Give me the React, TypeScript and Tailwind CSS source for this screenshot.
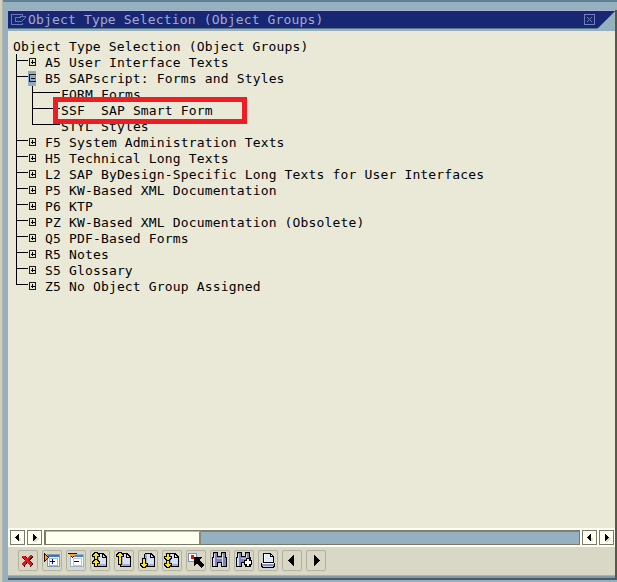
import { useState, type ReactNode } from "react";

type Row = {
  label: string;
  kind: "plus" | "minus" | "leaf";
};

const rows: Row[] = [
  { label: "A5 User Interface Texts", kind: "plus" },
  { label: "B5 SAPscript: Forms and Styles", kind: "minus" },
  { label: "FORM Forms", kind: "leaf" },
  { label: "SSF  SAP Smart Form", kind: "leaf" },
  { label: "STYL Styles", kind: "leaf" },
  { label: "F5 System Administration Texts", kind: "plus" },
  { label: "H5 Technical Long Texts", kind: "plus" },
  { label: "L2 SAP ByDesign-Specific Long Texts for User Interfaces", kind: "plus" },
  { label: "P5 KW-Based XML Documentation", kind: "plus" },
  { label: "P6 KTP", kind: "plus" },
  { label: "PZ KW-Based XML Documentation (Obsolete)", kind: "plus" },
  { label: "Q5 PDF-Based Forms", kind: "plus" },
  { label: "R5 Notes", kind: "plus" },
  { label: "S5 Glossary", kind: "plus" },
  { label: "Z5 No Object Group Assigned", kind: "plus" },
];

function Branch({ row, last, lastLeaf }: { row: Row; last: boolean; lastLeaf: boolean }) {
  const leaf = row.kind === "leaf";
  return (
    <svg
      width={leaf ? 53 : 37}
      height="16"
      className="-mt-px shrink-0"
      shapeRendering="crispEdges"
      fill="#000"
    >
      <rect x="8" y="0" width="1" height={last ? 7 : 16} />
      {leaf ? (
        <>
          <rect x="24" y="0" width="1" height={lastLeaf ? 7 : 16} />
          <rect x="24" y="6" width="28" height="1" />
        </>
      ) : (
        <>
          <rect x="8" y="6" width="12" height="1" />
          {row.kind === "minus" && <rect x="20" y="1" width="8" height="15" fill="#91abc9" />}
          <path d="M21 4h7v1h-7zM21 11h7v1h-7zM21 4h1v8h-1z" fill="#1c1c18" />
          <path d="M27 5h1v6h-1z" fill={row.kind === "minus" ? "#7288a2" : "#1c1c18"} />
          <rect x="23" y="8" width="4" height="1" />
          {row.kind === "plus" && <rect x="24" y="6" width="1" height="4" />}
        </>
      )}
    </svg>
  );
}

function Sheet() {
  return (
    <>
      <path d="M7 3h7v1h1v1h1v1h1v11H6V4h1z" fill="#000" />
      <path d="M7 4h6v4h3v8H7z" fill="#d3e2f5" />
      <path d="M7 4h2v12H7zM9 14h7v2H9z" fill="#a5add6" />
      <path d="M12 4h1v3h3v1h-4z" fill="#000" />
      <path d="M13 5h1v1h1v1h-2z" fill="#dfe7e0" />
    </>
  );
}

// yellow arrow with a one pixel black outline, stem length in pixels
function UpArrow({ y, stem }: { y: number; stem: number }) {
  return (
    <path
      d={`M5 ${y}h2v1h1v1h1v1H7v${stem}H5v-${stem}H3v-1h1v-1h1z`}
      fill="#ffe600"
      stroke="#000"
      strokeWidth="2"
      paintOrder="stroke"
    />
  );
}

function DownArrow({ y, stem }: { y: number; stem: number }) {
  return (
    <path
      d={`M5 ${y}h2v${stem}h2v1H8v1H7v1H5v-1H4v-1H3v-1h2z`}
      fill="#ffe600"
      stroke="#000"
      strokeWidth="2"
      paintOrder="stroke"
    />
  );
}

function Binoculars() {
  return (
    <>
      <path d="M3 2h5v4h3V2h5v5h1v10h-6v-4H8v4H2V7h1z" fill="#000" />
      <path d="M4 3h3v4h5V3h3v5h1v8h-4v-4H7v4H3V8h1z" fill="#8482bd" />
      <path d="M4 4h1v4H4zM3 8h2v8H3zM12 4h1v4h-1zM12 8h1v8h-1z" fill="#d6ddf4" />
      <path d="M7 8h5v1H7z" fill="#bdc6e7" />
    </>
  );
}

const tools: { name: string; icon: ReactNode }[] = [
  {
    name: "Cancel",
    icon: (
      <>
        <path d="M5.5 6.5L14 15.5M14 6L5 15.5" stroke="#3a0808" strokeWidth="3.6" />
        <path d="M5 6L13.5 15M13.5 5.5L4.5 15" stroke="#e7141c" strokeWidth="2.4" />
      </>
    ),
  },
  {
    name: "Expand",
    icon: (
      <>
        <path d="M5 4h13v13H5z" fill="#8499b8" />
        <path d="M6 7h11v9H6z" fill="#fff" />
        <path d="M6 5h11v2H6z" fill="#4173bd" />
        <path d="M7 8h9v8H7z" fill="#9cb5dc" />
        <path d="M8 9h7v6H8z" fill="#fff" />
        <path d="M8 11h5v1H8zM10 9h1v5h-1z" fill="#0000b5" />
        <path d="M2 3h1v1h1v1h1v1h1v1h1v1H6v1H5v1H4v1H3v1H2z" fill="#211000" />
        <path d="M3 5h1v1h1v1h1v1H5v1H4v1H3z" fill="#ff9c18" />
      </>
    ),
  },
  {
    name: "Collapse",
    icon: (
      <>
        <path d="M4 4h14v13H4z" fill="#9cb0cf" />
        <path d="M5 7h12v9H5z" fill="#fff" />
        <path d="M5 5h12v2H5z" fill="#527bbd" />
        <path d="M7 8h9v8H7z" fill="#b5c6e0" />
        <path d="M8 9h7v6H8z" fill="#fff" />
        <path d="M8 11h5v1H8z" fill="#0000b5" />
        <path d="M2 3h9v1h-1v1H9v1H8v1H7v1H6V7H5V6H4V5H3V4H2z" fill="#211000" />
        <path d="M3 4h7v1H9v1H7v1H6V6H4V5H3z" fill="#ff9c18" />
      </>
    ),
  },
  {
    name: "First page",
    icon: (
      <>
        <Sheet />
        <UpArrow y={3} stem={3} />
        <UpArrow y={10} stem={3} />
      </>
    ),
  },
  {
    name: "Previous page",
    icon: (
      <>
        <Sheet />
        <UpArrow y={3} stem={8} />
      </>
    ),
  },
  {
    name: "Next page",
    icon: (
      <>
        <Sheet />
        <DownArrow y={9} stem={5} />
      </>
    ),
  },
  {
    name: "Last page",
    icon: (
      <>
        <Sheet />
        <DownArrow y={4} stem={3} />
        <DownArrow y={11} stem={3} />
      </>
    ),
  },
  {
    name: "Select",
    icon: (
      <>
        <path d="M2 3h9v9H2z" fill="#7c8cc0" />
        <path d="M3 4h7v7H3z" fill="#fff" />
        <path d="M5 5h3v4H5z" fill="#ef1010" />
        <path d="M8 7h8v1h-1v1h-1v2h1v1h1v1h1v1h1v2h-1v1h-1v1h-1v-1h-1v-1h-1v-1h-1v-1h-2v1h-1v1H8z" fill="#000" />
      </>
    ),
  },
  { name: "Find", icon: <Binoculars /> },
  {
    name: "Find next",
    icon: (
      <>
        <Binoculars />
        <path d="M12 8h4v2h2v5h-2v2h-4v-2h-2v-5h2z" fill="#000" />
        <path d="M13 9h2v2h2v3h-2v2h-2v-2h-2v-3h2z" fill="#fff" />
      </>
    ),
  },
  {
    name: "Print",
    icon: (
      <>
        <path d="M5 3h8v1h1v1h1v1h1v7h1v4h-1v1H4v-1H3v-4h2z" fill="#000" />
        <path d="M6 4h6v3h3v5H6z" fill="#dbe9fa" />
        <path d="M6 4h1v8H6zM13 5h1v1h-1z" fill="#fff" />
        <path d="M4 13h12v1H4z" fill="#fff" />
        <path d="M4 14h12v2H4z" fill="#8492c3" />
        <path d="M5 16h10v1H5z" fill="#c6cee8" />
      </>
    ),
  },
  { name: "Previous", icon: <path d="M6 10h1V9h1V8h1V7h1V6h1V5h1v11h-1v-1h-1v-1H9v-1H8v-1H7v-1H6z" fill="#000" /> },
  { name: "Next", icon: <path d="M8 5h1v1h1v1h1v1h1v1h1v1h1v1h-1v1h-1v1h-1v1h-1v1H9v1H8z" fill="#000" /> },
];

function ScrollButton({ dir }: { dir: "left" | "right" }) {
  return (
    <button
      type="button"
      aria-label={`Scroll ${dir}`}
      className="h-[15px] w-[15px] shrink-0 border border-[#7b7969] bg-[#fffff2]"
    >
      <svg width="13" height="13" shapeRendering="crispEdges">
        {dir === "left" ? (
          <>
            <path d="M6 7h4v3H8V9H7V8H6z" fill="#dfdccd" />
            <path d="M4 6h1V5h1V4h1V3h1v7H7V9H6V8H5V7H4z" fill="#000" />
          </>
        ) : (
          <>
            <path d="M6 7h5v1h-1v1H9v1H8v1H6z" fill="#dfdccd" />
            <path d="M5 3h1v1h1v1h1v1h1v1H8v1H7v1H6v1H5z" fill="#000" />
          </>
        )}
      </svg>
    </button>
  );
}

export default function App() {
  const [marked] = useState("SSF  SAP Smart Form");
  const lastLeaf = rows.map((r) => r.kind).lastIndexOf("leaf");

  return (
    <div className="flex h-[582px] w-[617px] overflow-hidden bg-[#94b0c1] font-['DejaVu_Sans_Mono',monospace] text-[13px] tracking-[0.16px] text-black">
      <div className="w-[3px] shrink-0 border-r border-[#b5b5a8] bg-[#d0cfc0]" />
      <div className="flex min-w-0 flex-1 flex-col border-t-2 border-[#5e8090] pl-[5px]">
        <div className="flex h-[578px] flex-col border-b-2 border-b-[#4f5b60] pt-2">
          <div className="flex min-h-0 flex-1 flex-col border-r-2 border-r-[#57574d]">
            <div className="h-px shrink-0 bg-[#a9b4d2]" />
            <div className="h-5 shrink-0 bg-[#94b0c1]">
              <div className="flex h-[18px] w-[607px] bg-[#5b7688] [clip-path:polygon(0_0,100%_0,589px_100%,0_100%)]">
                <div className="flex h-[17px] w-full items-center bg-[#172773] pl-0.5">
                  <svg width="18" height="15" fill="none" stroke="#6878b5" shapeRendering="crispEdges">
                    <path d="M12.5 4V2.5H1.5V12.5H12.5V11M5.5 5.5H10.5V4.5H15.5V5.5L11.5 9.5H5.5Z" />
                  </svg>
                  <span className="flex-1 whitespace-pre leading-[17px] text-[#a3aad2]">
                    Object Type Selection (Object Groups)
                  </span>
                  <svg width="11" height="11" className="mr-[20px]" fill="none" stroke="#7180b9" shapeRendering="crispEdges">
                    <rect x="0.5" y="0.5" width="10" height="10" />
                    <path d="M3 3h1v1h1v1h1V4h1V3h1v1H7v1H6v1h1v1h1v1H7V7H6V6H5v1H4v1H3V7h1V6h1V5H4V4H3z" fill="#7180b9" stroke="none" />
                  </svg>
                </div>
              </div>
            </div>

            <div className="relative min-h-0 flex-1 bg-[#eae9d8] pt-2">
              <div className="h-4 whitespace-pre pl-[5px] leading-4">Object Type Selection (Object Groups)</div>
              {rows.map((row, i) => (
                <div key={row.label} className="flex h-4 whitespace-pre leading-4">
                  <Branch row={row} last={i === rows.length - 1} lastLeaf={i === lastLeaf} />
                  <span>{row.label}</span>
                  {row.label === marked && (
                    <span className="absolute top-[66px] left-[45px] h-[27px] w-[194px] border-5 border-[#ee1c25]" />
                  )}
                </div>
              ))}
            </div>

            <div className="flex h-[19px] shrink-0 gap-0.5 bg-[#fffff2] pt-0.5 pr-px pl-0.5">
              <ScrollButton dir="left" />
              <ScrollButton dir="right" />
              <div className="flex h-[15px] flex-1 border border-[#7b7969] bg-[#94b0c1]">
                <div className="h-full w-[156px] border-t border-r-2 border-l border-t-[#b9b7a5] border-r-[#8a8879] border-l-[#7b7969] bg-[#fffff0]" />
                <div className="h-full flex-1 border-t border-[#6b8798]" />
              </div>
              <ScrollButton dir="left" />
              <ScrollButton dir="right" />
            </div>

            <div className="flex h-[28px] shrink-0 gap-1 bg-[#d9d7c6] pt-[3px] pl-[10px]">
              {tools.map((tool) => (
                <button
                  key={tool.name}
                  type="button"
                  aria-label={tool.name}
                  className="h-[21px] w-5 rounded-[2px] border border-[#b3b1a1]"
                >
                  <svg width="20" height="21" className="-m-px max-w-none" shapeRendering="crispEdges">
                    {tool.icon}
                  </svg>
                </button>
              ))}
            </div>
            <div className="h-[3px] shrink-0 border-t border-[#b0b0a4] bg-[#7f9cae]" />
          </div>
        </div>
      </div>
    </div>
  );
}
